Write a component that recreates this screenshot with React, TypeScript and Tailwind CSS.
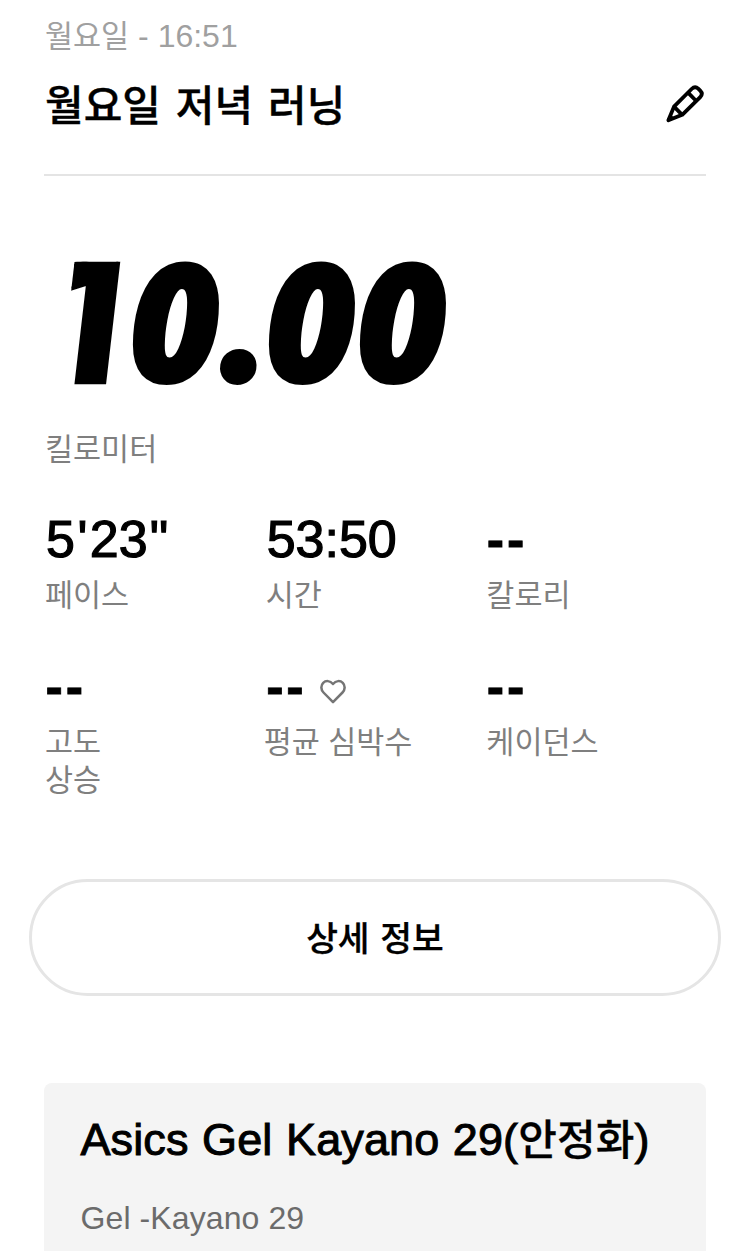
import type { ReactNode } from "react";

const stats: { value: ReactNode; label: ReactNode; heart?: boolean }[] = [
    { value: <>5<span className="px-[2.5px]">'</span>23<span className="pl-[2px] tracking-[1px]">"</span></>, label: "페이스" },
    { value: "53:50", label: "시간" },
    { value: "--", label: "칼로리" },
    { value: "--", label: <>고도<br />상승</> },
    { value: "--", label: "평균 심박수", heart: true },
    { value: "--", label: "케이던스" },
];

function PencilIcon() {
    return (
        <svg width="42" height="42" viewBox="0 0 42 42" fill="none" stroke="#000" strokeWidth="3.8" strokeLinejoin="round">
            <path d="M4.4 37.2 10 23.6 27.6 6Q31 2.6 34.2 5.6L36.2 7.6Q39.4 10.8 36.2 14.2L18.2 31.8Z" />
            <path d="M24 9.6 32.3 18M10 23.6 18.2 31.8M4.4 37.2 8.4 33.2" />
        </svg>
    );
}

function HeartIcon() {
    return (
        <svg width="26" height="25" viewBox="0 0 26 25" fill="none" stroke="#757575" strokeWidth="2.5" strokeLinejoin="round">
            <path d="M13 23.2 3.5 13.5C.8 10.8.6 6.5 3.2 3.9 5.8 1.3 10 1.4 13 5 16 1.4 20.2 1.3 22.8 3.9 25.4 6.5 25.2 10.8 22.5 13.5Z" />
        </svg>
    );
}

function Stat({ value, label, heart }: { value: ReactNode; label: ReactNode; heart?: boolean }) {
    const empty = value === "--";
    return (
        <div>
            <div className="flex h-[60px] items-center gap-[13px] pl-[2px]">
                <span
                    className={
                        empty
                            ? "-ml-[.5px] text-[52px] leading-[60px] font-bold tracking-[2.9px] [-webkit-text-stroke:.8px_#000]"
                            : "text-[52px] leading-[60px] [-webkit-text-stroke:1.2px_#000]"
                    }
                >
                    {value}
                </span>
                {heart && <div className="pt-[11px]"><HeartIcon /></div>}
            </div>
            <div className={heart ? "mt-[7px] -ml-px text-[30.5px] leading-[38px] text-[#7f7f7f]" : "mt-[7px] pl-px text-[30.5px] leading-[38px] text-[#7f7f7f]"}>
                {label}
            </div>
        </div>
    );
}

export default function App() {
    return (
        <div className="h-[1251px] w-full overflow-hidden bg-white px-11 font-['Liberation_Sans','Noto_Sans_CJK_KR',sans-serif] text-black">
            {/* Header */}
            <div className="pt-[17px] pl-px text-[32px] leading-[38px] whitespace-nowrap text-[#a0a0a0]">
                <span className="text-[30.5px]">월요일</span> - 16:51
            </div>
            <div className="mt-[19px] flex items-center justify-between">
                <h1 className="pl-px text-[42px] leading-[58px] font-medium [word-spacing:5.5px] [-webkit-text-stroke:.4px_#000] font-['Noto_Sans_CJK_KR',sans-serif]">월요일 저녁 러닝</h1>
                <div className="pt-[2px]"><PencilIcon /></div>
            </div>
            <div className="mt-[42px] h-[2px] bg-[#e4e4e4]" />

            {/* Distance */}
            <div className="mt-[57px] flex h-[170px] pl-[26px] font-['Open_Sans',sans-serif] text-[165px] leading-[170px] font-extrabold italic">
                {/* flat flag on the leading digit */}
                <span className="mr-[35.5px] -ml-[38px] w-[61px] origin-bottom-left translate-y-[10px] -skew-x-[7.4deg] scale-y-[1.12] font-['Roboto',sans-serif] text-[168px] font-black not-italic [-webkit-text-stroke:4px_#000] [clip-path:inset(35px_-40px_-10px_25px)]">1</span>
                <span className="w-[91px] origin-left scale-x-[.955] [-webkit-text-stroke:2px_#000]">0</span>
                <span className="w-[45px] -translate-x-[8px] translate-y-px font-['Inter',sans-serif] text-[172px] font-black [-webkit-text-stroke:2px_#000]">.</span>
                <span className="w-[91px] origin-left scale-x-[.955] [-webkit-text-stroke:2px_#000]">0</span>
                <span className="w-[91px] origin-left scale-x-[.955] [-webkit-text-stroke:2px_#000]">0</span>
            </div>
            <div className="mt-[27px] pl-px text-[30.5px] leading-[38px] text-[#7f7f7f]">킬로미터</div>

            {/* Stats */}
            <div className="mt-[41px] grid grid-cols-3 gap-y-[41.5px]">
                {stats.map((s, i) => (
                    <Stat key={i} {...s} />
                ))}
            </div>

            <button className="mt-[80px] -ml-[15px] flex h-[117px] w-[692px] items-center justify-center rounded-full border-[3px] border-[#e5e5e5] text-[34.5px] font-medium [word-spacing:3px] [-webkit-text-stroke:.3px_#000] font-['Noto_Sans_CJK_KR',sans-serif]">
                상세 정보
            </button>

            {/* Shoes */}
            <div className="mt-[87px] h-[200px] rounded-lg bg-[#f4f4f4] px-[36.5px] pt-[29px] whitespace-nowrap">
                <div className="text-[45px] leading-[56px] tracking-[.1px] [word-spacing:1px] [-webkit-text-stroke:1px_#000]">
                    Asics Gel Kayano 29(<span className="text-[42px] font-medium [-webkit-text-stroke:.3px_#000]">안정화</span>)
                </div>
                <div className="mt-[30px] text-[32px] leading-[38px] tracking-[.1px] text-[#6b6b6b]">Gel -Kayano 29</div>
            </div>
        </div>
    );
}
